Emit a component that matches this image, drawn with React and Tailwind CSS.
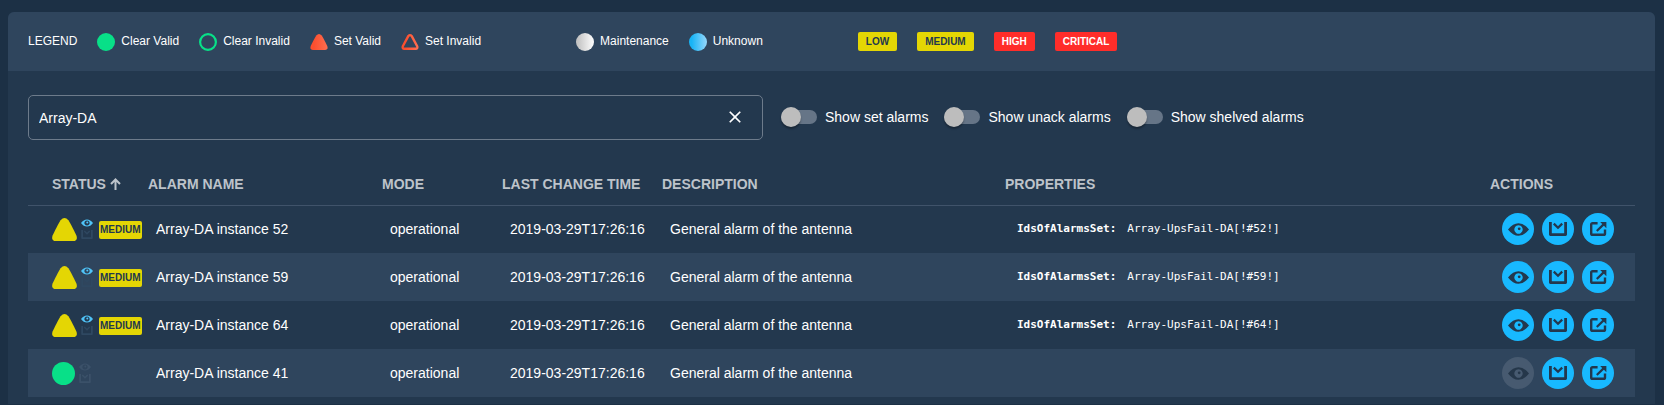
import { useState } from "react";

const GREEN = "#08e088";
const YELLOW = "#e4d604";

function Circle({ className, fill, outline }) {
  return (
    <svg viewBox="0 0 18 18" className={`shrink-0 ${className}`} aria-hidden="true">
      <circle
        cx="9"
        cy="9"
        r={outline ? 7.9 : 9}
        fill={outline ? "none" : fill}
        stroke={outline ? fill : "none"}
        strokeWidth="2.2"
      />
    </svg>
  );
}

function Triangle({ className, fill, outline }) {
  return (
    <svg viewBox="0 0 25 23" className={`shrink-0 ${className}`} aria-hidden="true">
      {outline ? (
        <path
          d="M10 3 Q12.5 .4 15 3 L22.8 17.6 Q24 21.2 20.6 21.2 H4.4 Q1 21.2 2.2 17.6 Z"
          fill="none"
          stroke={fill}
          strokeWidth="3.4"
          strokeLinejoin="round"
        />
      ) : (
        <path
          d="M8.6 2.3 Q12.5 -2.3 16.4 2.3 Q18 4.4 24.4 17.4 Q26.2 23 21 23 H4 Q-1.2 23 .6 17.4 Q7 4.4 8.6 2.3 Z"
          fill={fill}
        />
      )}
    </svg>
  );
}

function Gradients() {
  return (
    <svg className="absolute size-0" aria-hidden="true">
      <defs>
        <linearGradient id="grad-red">
          <stop offset="0.2" stopColor="#fb4f2f" />
          <stop offset="1" stopColor="#ff6e50" />
        </linearGradient>
        <linearGradient id="grad-gray">
          <stop offset="0.1" stopColor="#c4c4c4" />
          <stop offset="0.9" stopColor="#f8f8f8" />
        </linearGradient>
        <linearGradient id="grad-blue">
          <stop offset="0.15" stopColor="#18b4f5" />
          <stop offset="0.95" stopColor="#8ed4fa" />
        </linearGradient>
      </defs>
    </svg>
  );
}

function EyeIcon({ className }) {
  return (
    <svg viewBox="0 0 21 13" className={className} fill="currentColor" aria-hidden="true">
      <path
        fillRule="evenodd"
        d="M0 6.5 Q5 .2 10.5 .2 T21 6.5 Q16 12.8 10.5 12.8 T0 6.5 Z M10.5 2.3 a4.2 4.2 0 1 0 .01 0 Z"
      />
      <circle cx="11.2" cy="5.8" r="1.4" />
    </svg>
  );
}

function SmallEyeIcon({ className }) {
  return (
    <svg viewBox="0 0 12 8" className={className} fill="currentColor" aria-hidden="true">
      <path
        fillRule="evenodd"
        d="M0 4 Q2.5 .4 6 .4 T12 4 Q9.5 7.6 6 7.6 T0 4 Z M6 1.4 a2.6 2.6 0 1 0 .01 0 Z"
      />
      <circle cx="6.3" cy="3.6" r="1" />
    </svg>
  );
}

function ShelveIcon({ className }) {
  return (
    <svg viewBox="0 0 18 14" className={className} fill="none" stroke="currentColor" aria-hidden="true">
      <path d="M1.4 0 V12.6 H16.6 V0" strokeWidth="2.8" strokeLinejoin="round" />
      <path d="M4.8 1.6 L9 5.7 L13.2 1.6" strokeWidth="2.3" />
    </svg>
  );
}

function OpenIcon({ className }) {
  return (
    <svg viewBox="0 0 17 14" className={className} fill="none" stroke="currentColor" aria-hidden="true">
      <path
        d="M7.6 1.2 H2.6 Q1.2 1.2 1.2 2.6 V11.4 Q1.2 12.8 2.6 12.8 H13.6 Q15 12.8 15 11.4 V7.6"
        strokeWidth="2.4"
      />
      <path d="M6.8 9 L13.6 2.4" strokeWidth="2.2" />
      <path d="M10.2 0 H16.4 V6.2 Z" fill="currentColor" stroke="none" />
    </svg>
  );
}

const badgeColors = {
  LOW: "bg-[#e4d604] text-[#23384e]",
  MEDIUM: "bg-[#e4d604] text-[#23384e]",
  HIGH: "bg-[#ff2d2a] text-white",
  CRITICAL: "bg-[#ff2d2a] text-white",
};

function LegendItem({ icon, label }) {
  return (
    <li className="flex items-center gap-1.5">
      <span className="flex pt-0.5">{icon}</span>
      {label}
    </li>
  );
}

function Legend() {
  return (
    <header className="flex flex-wrap items-center gap-x-[95px] gap-y-2 bg-[#2f455d] px-5 pt-[19px] pb-5 text-[12px] leading-[18px]">
      <ul className="flex items-center gap-5">
        <li>LEGEND</li>
        <LegendItem icon={<Circle className="size-[18px]" fill={GREEN} />} label="Clear Valid" />
        <LegendItem icon={<Circle className="size-[18px]" fill={GREEN} outline />} label="Clear Invalid" />
        <LegendItem icon={<Triangle className="h-4 w-[18px]" fill="url(#grad-red)" />} label="Set Valid" />
        <LegendItem icon={<Triangle className="h-4 w-[18px]" fill="url(#grad-red)" outline />} label="Set Invalid" />
      </ul>
      <ul className="flex items-center gap-5">
        <LegendItem icon={<Circle className="size-[18px]" fill="url(#grad-gray)" />} label="Maintenance" />
        <LegendItem icon={<Circle className="size-[18px]" fill="url(#grad-blue)" />} label="Unknown" />
      </ul>
      <ul className="flex items-center gap-5">
        {Object.keys(badgeColors).map((level) => (
          <li
            key={level}
            className={`rounded-xs px-2 text-[10px] leading-[19px] font-bold ${badgeColors[level]}`}
          >
            {level}
          </li>
        ))}
      </ul>
    </header>
  );
}

function Toggle({ label }) {
  return (
    <label className="flex cursor-pointer items-center gap-2 text-[14px] leading-5">
      <span className="relative flex h-5 w-9 items-center">
        <input type="checkbox" role="switch" className="peer absolute inset-0 z-10 cursor-pointer opacity-0" />
        <span className="h-3.5 w-9 rounded-full bg-[#667587]" />
        <span className="absolute left-0 size-5 rounded-full bg-[#bdbdbd] shadow-[0_2px_2px_rgba(0,0,0,0.3)] peer-checked:left-4" />
      </span>
      {label}
    </label>
  );
}

function Toolbar() {
  const [query, setQuery] = useState("Array-DA");
  return (
    <div className="flex items-center gap-[18px] px-5 pt-6">
      <div className="flex h-[45px] w-[735px] items-center rounded-[5px] border border-[#6d7b8b] pr-[17px] pl-2.5">
        <input
          type="text"
          aria-label="Search alarms"
          value={query}
          onChange={(e) => setQuery(e.target.value)}
          className="min-w-0 flex-1 bg-transparent pt-px text-[14px] leading-5 outline-none"
        />
        <button type="button" aria-label="Clear search" className="pb-px" onClick={() => setQuery("")}>
          <svg viewBox="0 0 24 24" className="size-5" fill="currentColor" aria-hidden="true">
            <path d="M19 6.41L17.59 5 12 10.59 6.41 5 5 6.41 10.59 12 5 17.59 6.41 19 12 13.41 17.59 19 19 17.59 13.41 12z" />
          </svg>
        </button>
      </div>
      <div className="flex items-center gap-4 pb-px">
        <Toggle label="Show set alarms" />
        <Toggle label="Show unack alarms" />
        <Toggle label="Show shelved alarms" />
      </div>
    </div>
  );
}

const alarms = [
  { id: 52, set: true },
  { id: 59, set: true },
  { id: 64, set: true },
  { id: 41, set: false },
];

function Status({ set }) {
  return (
    <div className="flex items-center gap-1">
      {set ? (
        <Triangle className="h-[23px] w-[25px]" fill={YELLOW} />
      ) : (
        <Circle className="size-[23px]" fill={GREEN} />
      )}
      <div className="flex flex-col gap-[3px]">
        <SmallEyeIcon className={`h-2 w-3 ${set ? "text-[#4fc3f7]" : "text-[#3b5169]"}`} />
        <ShelveIcon className={`h-[9px] w-3 ${set ? "text-[#2f4861]" : "text-[#3b5169]"}`} />
      </div>
      {set && (
        <span className="mt-0.5 ml-0.5 rounded-xs bg-[#e4d604] px-px text-[10px] leading-[18px] font-bold text-[#23384e]">
          MEDIUM
        </span>
      )}
    </div>
  );
}

function ActionButton({ label, disabled, children }) {
  return (
    <button
      type="button"
      aria-label={label}
      disabled={disabled}
      className="flex size-8 items-center justify-center rounded-full bg-[#18b9ff] text-[#23384e] disabled:bg-[#475a70] disabled:text-[#25374a]"
    >
      {children}
    </button>
  );
}

function AlarmTable() {
  return (
    <div className="px-5 pt-[22px] pb-[7px]">
      <table className="w-full table-fixed border-collapse text-left text-[14px] leading-5">
        <colgroup>
          <col className="w-[120px]" />
          <col className="w-[234px]" />
          <col className="w-[120px]" />
          <col className="w-[160px]" />
          <col className="w-[343px]" />
          <col />
          <col className="w-[145px]" />
        </colgroup>
        <thead>
          <tr className="h-[43px] border-b border-[#40536a] text-[#bdc3ca] *:pt-0.5">
            <th className="pl-6">
              <span className="flex items-center gap-1">
                STATUS
                <svg viewBox="0 0 11 12" className="h-3 w-[11px]" fill="none" stroke="currentColor" strokeWidth="2" aria-hidden="true">
                  <path d="M5.5 12 V1.6 M1 6 L5.5 1.5 L10 6" />
                </svg>
              </span>
            </th>
            <th>ALARM NAME</th>
            <th>MODE</th>
            <th className="whitespace-nowrap">LAST CHANGE TIME</th>
            <th>DESCRIPTION</th>
            <th>PROPERTIES</th>
            <th>ACTIONS</th>
          </tr>
        </thead>
        <tbody>
          {alarms.map(({ id, set }) => (
            <tr key={id} className="h-12 even:bg-[#2f455d]">
              <td className="pl-6">
                <Status set={set} />
              </td>
              <td className="pl-2">Array-DA instance {id}</td>
              <td className="pl-2">operational</td>
              <td className="pl-2">2019-03-29T17:26:16</td>
              <td className="pl-2">General alarm of the antenna</td>
              <td className="pl-3 font-['DejaVu_Sans_Mono',monospace] text-[11px]">
                {set && (
                  <span className="flex gap-[11px]">
                    <b>IdsOfAlarmsSet:</b>
                    <span>Array-UpsFail-DA[!#{id}!]</span>
                  </span>
                )}
              </td>
              <td className="pl-3">
                <div className="flex gap-2">
                  <ActionButton label="Acknowledge" disabled={!set}>
                    <EyeIcon className="h-[13px] w-[21px]" />
                  </ActionButton>
                  <ActionButton label="Shelve">
                    <ShelveIcon className="h-3.5 w-[18px]" />
                  </ActionButton>
                  <ActionButton label="Open details">
                    <OpenIcon className="h-3.5 w-[17px]" />
                  </ActionButton>
                </div>
              </td>
            </tr>
          ))}
        </tbody>
      </table>
    </div>
  );
}

export default function App() {
  return (
    <div className="min-h-screen bg-[#1c3045] pt-3 pr-[9px] pl-2 font-['Liberation_Sans',Arial,sans-serif] text-white">
      <Gradients />
      <main className="overflow-hidden rounded-t-md bg-[#23384e]">
        <Legend />
        <Toolbar />
        <AlarmTable />
      </main>
    </div>
  );
}
